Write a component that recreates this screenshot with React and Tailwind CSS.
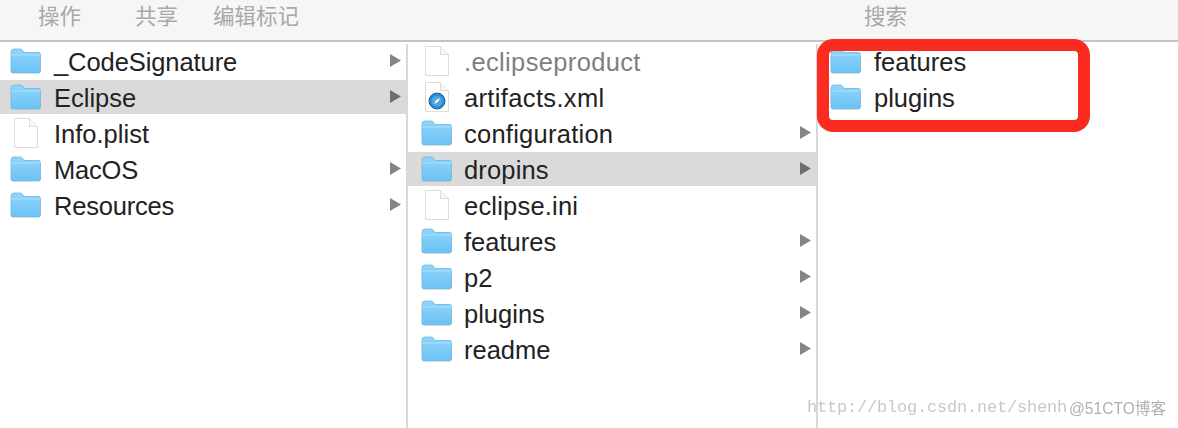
const FONT = "font-['Liberation_Sans',sans-serif]";

function Folder() {
  return (
    <svg width="31" height="26" viewBox="0 0 31 26" className="shrink-0">
      <defs>
        <linearGradient id="fg" x1="0" y1="0" x2="0" y2="1">
          <stop offset="0" stopColor="#8fd6fb" />
          <stop offset="1" stopColor="#6cc2f5" />
        </linearGradient>
      </defs>
      <path d="M1 4.5 Q1 1 3.5 1 H10 Q12 1 13 3 L14 4.5 H28.5 Q30.5 4.5 30.5 6.5 V23 Q30.5 25 28.5 25 H3 Q1 25 1 23 Z" fill="url(#fg)" stroke="#74b4d8" strokeWidth="0.8" />
      <path d="M1 7 H30.5" stroke="#a6e0fc" strokeWidth="1.2" />
    </svg>
  );
}

function Doc({ safari }) {
  return (
    <svg width="24" height="30" viewBox="0 0 24 30" className="shrink-0">
      <path d="M0.5 0.5 H15.5 L23.5 8.5 V29.5 H0.5 Z" fill="#fff" stroke="#dcdcdc" />
      <path d="M15.5 0.5 V8.5 H23.5" fill="#f6f6f6" stroke="#dcdcdc" />
      {safari && (
        <g>
          <circle cx="12" cy="19" r="8" fill="#2f86cf" stroke="#23669f" strokeWidth="1" />
          <circle cx="12" cy="19" r="5.6" fill="#4aa5e6" />
          <path d="M15 16 L13 20 L9 22 L11 18 Z" fill="#fff" />
        </g>
      )}
    </svg>
  );
}

function Row({ name, icon = "folder", arrow, selected, muted, track, gapClass, padClass }) {
  const iconBox = icon === "folder" ? <Folder /> : <Doc safari={icon === "safari"} />;
  return (
    <div className="h-9 pb-[2px] flex flex-col">
      <div className={`flex-1 flex items-center ${padClass} ${gapClass} ${selected ? "bg-[#dadada]" : ""}`}>
        <div className="w-[31px] shrink-0 flex justify-center">{iconBox}</div>
        <span className={`flex-1 text-[25.5px] leading-none pt-[3px] ${track || ""} ${muted ? "text-[#808080]" : "text-[#222]"}`}>{name}</span>
        {arrow && (
          <svg width="13" height="15" viewBox="0 0 13 15" className="mr-[4px] shrink-0 -mt-[2px]">
            <path d="M1 1 L12 7.5 L1 14 Z" fill={selected ? "#6e6e6e" : "#858585"} />
          </svg>
        )}
      </div>
    </div>
  );
}

const col1 = [
  { name: "_CodeSignature", arrow: true, track: "tracking-[-0.08px]" },
  { name: "Eclipse", arrow: true, selected: true },
  { name: "Info.plist", icon: "doc" },
  { name: "MacOS", arrow: true, track: "tracking-[-0.2px]" },
  { name: "Resources", arrow: true, track: "tracking-[-0.2px]" },
];
const col2 = [
  { name: ".eclipseproduct", icon: "doc", muted: true, track: "tracking-[0.35px]" },
  { name: "artifacts.xml", icon: "safari", track: "tracking-[0.35px]" },
  { name: "configuration", arrow: true, track: "tracking-[0.25px]" },
  { name: "dropins", arrow: true, selected: true, track: "tracking-[0.15px]" },
  { name: "eclipse.ini", icon: "doc", track: "tracking-[0.2px]" },
  { name: "features", arrow: true },
  { name: "p2", arrow: true },
  { name: "plugins", arrow: true },
  { name: "readme", arrow: true },
];
const col3 = [{ name: "features" }, { name: "plugins" }];

export default function App() {
  return (
    <div className={`relative w-[1178px] h-[428px] overflow-hidden bg-white flex flex-col ${FONT}`}>
      <div className="h-[42px] shrink-0 bg-[#f6f6f6] border-b-2 border-[#c4c4c4] flex items-center text-[#a8a8a8] text-[21.5px] font-['Noto_Sans_CJK_SC',sans-serif] pb-[10px]">
        <span className="ml-[38px]">操作</span>
        <span className="ml-[54px]">共享</span>
        <span className="ml-[35px]">编辑标记</span>
        <span className="ml-[565px]">搜索</span>
      </div>
      <div className="flex flex-1 pt-[2px]">
        <div className="w-[408px] shrink-0 border-r-2 border-[#d8d8d8]">
          {col1.map((r) => <Row key={r.name} padClass="pl-[10px]" gapClass="gap-[13px]" {...r} />)}
        </div>
        <div className="w-[410px] shrink-0 border-r-2 border-[#d8d8d8]">
          {col2.map((r) => <Row key={r.name} padClass="pl-[13px]" gapClass="gap-[12px]" {...r} />)}
        </div>
        <div className="flex-1">
          {col3.map((r) => <Row key={r.name} padClass="pl-[12px]" gapClass="gap-[13px]" {...r} />)}
        </div>
      </div>
      <div className="absolute left-[817px] top-[39px] w-[273px] h-[93px] border-[12px] border-[#fb2c1f] rounded-[16px]" />
      <div className="absolute left-[807px] top-[398px] text-[17px] leading-5 text-[#c8c8c8] font-['Liberation_Mono',monospace] whitespace-nowrap tracking-[-0.2px] blur-[0.4px]">
        http://blog.csdn.net/shenh
      </div>
      <div className="absolute left-[1069px] top-[399px] text-[15.6px] leading-5 text-[#b0b0b0] font-['Liberation_Sans','Noto_Sans_CJK_SC',sans-serif] whitespace-nowrap blur-[0.4px]">
        @51CTO博客
      </div>
    </div>
  );
}
